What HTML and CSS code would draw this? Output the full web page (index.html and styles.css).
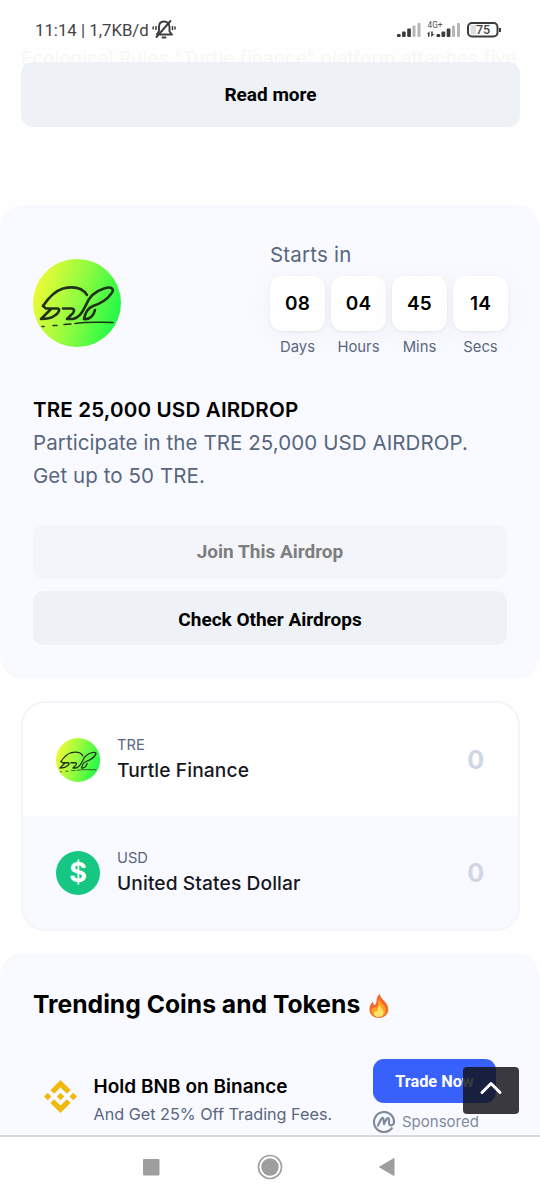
FILE: index.html
```html
<!DOCTYPE html>
<html lang="en">
<head>
<meta charset="utf-8">
<title>Turtle Finance Airdrop</title>
<link rel="stylesheet" href="styles.css">
</head>
<body>
<svg class="defs" width="0" height="0" aria-hidden="true">
  <defs>
    <linearGradient id="lime" x1="0" y1="0.35" x2="1" y2="0.65">
      <stop offset="0" stop-color="#f0fb35"/>
      <stop offset="0.5" stop-color="#90fc40"/>
      <stop offset="0.85" stop-color="#3dfb45"/>
      <stop offset="1" stop-color="#22f64c"/>
    </linearGradient>
    <symbol id="turtle" viewBox="0 0 88 88">
      <circle cx="44" cy="44" r="44" fill="url(#lime)"/>
      <g fill="none" stroke="#1f331c" stroke-width="2.600" stroke-linecap="round" stroke-linejoin="round">
        <path d="M10 47C16 38 22 32 30 29.500C41 27 49 28 54 36"/>
        <path d="M10 47L13 49.500H24C28 49.500 26 54 21 57C17 60 13 60 8 60L18 50"/>
        <path d="M30 49.500H38C43 49.500 41 54 38 56L34 60H40C48 58 50 51 53 46C56 38 63 32 71 29.500C79 27 82 30 78 35C73 42 66 45 60 47C55 49 52 55 51 60C57 61 61 56 62 51"/>
        <path d="M9 67.500H11M20 66.500H24M31 65.500L38 65M42 64.500C56 62.500 66 63.500 80 63.500" stroke-width="1.500"/>
      </g>
    </symbol>
  </defs>
</svg>
<div class="screen">
  <header class="status">
    <span class="clock">11:14 | 1,7KB/d</span>
    <svg class="bell" width="24" height="22" viewBox="0 0 24 22" fill="none" stroke="#3c3c3c" stroke-width="1.900" stroke-linecap="round" stroke-linejoin="round">
      <path d="M8 15.500H20L17.500 12.500V8C17.500 4.500 15 2.500 12 2.500S7 4.500 7 8V12L5 15.500"/>
      <path d="M4.500 18L18.500 2M10.500 18.500H13.500"/><path d="M4 7.500V10.500M1.200 8V10M20.500 7.500V10.500M23 8V10" stroke-width="1.500"/>
    </svg>
    <span class="grow"></span>
    <svg class="signals" width="108" height="24" viewBox="0 0 108 24">
      <g fill="#3a3a3a">
        <rect x="1" y="14" width="3.700" height="3" rx="1"/><rect x="6" y="11.500" width="3.700" height="5.500" rx="1"/><rect x="11.200" y="8.500" width="3.700" height="8.500" rx="1"/>
        <rect x="40.500" y="14" width="3.700" height="3" rx="1"/><rect x="45.500" y="11.500" width="3.700" height="5.500" rx="1"/><rect x="50.700" y="8.500" width="3.700" height="8.500" rx="1"/>
        <path d="M31 14L33.500 11.200V16.700H32V14ZM35.200 11.500H36.700V14H38.500L35.200 17Z"/>
      </g>
      <g fill="#b5b5b5">
        <rect x="16.500" y="5.500" width="3" height="11.500" rx="1"/><rect x="21.500" y="3" width="3" height="14" rx="1"/>
        <rect x="56" y="5.500" width="3" height="11.500" rx="1"/><rect x="61" y="3" width="3" height="14" rx="1"/>
      </g>
      <text x="31.500" y="7.500" class="net">4G+</text>
      <rect x="72" y="3" width="29.500" height="13.500" rx="4" fill="#fff" stroke="#3a3a3a" stroke-width="2"/>
      <path d="M74.500 5H80V14.500H74.500Z" fill="#dedede"/>
      <path d="M104 8V12" stroke="#3a3a3a" stroke-width="2"/>
      <text x="87" y="14" class="pct">75</text>
    </svg>
  </header>

  <main class="page">
    <p class="faded">Ecological Rules “Turtle finance” platform attaches five</p>
    <button class="btn read">Read more</button>

    <section class="airdrop">
      <div class="top">
        <svg class="logo" width="88" height="88"><use href="#turtle"/></svg>
        <div class="countdown">
          <div class="starts">Starts in</div>
          <div class="units">
            <div class="unit"><b>08</b><span>Days</span></div>
            <div class="unit"><b>04</b><span>Hours</span></div>
            <div class="unit"><b>45</b><span>Mins</span></div>
            <div class="unit"><b>14</b><span>Secs</span></div>
          </div>
        </div>
      </div>
      <h2 class="title">TRE 25,000 USD AIRDROP</h2>
      <p class="desc">Participate in the TRE 25,000 USD AIRDROP.<br>Get up to 50 TRE.</p>
      <button class="btn join">Join This Airdrop</button>
      <button class="btn check">Check Other Airdrops</button>
    </section>

    <section class="converter">
      <div class="coin">
        <svg width="44" height="44"><use href="#turtle"/></svg>
        <div class="names"><span class="sym">TRE</span><span class="name">Turtle Finance</span></div>
        <span class="amount">0</span>
      </div>
      <div class="coin fiat">
        <span class="usd">$</span>
        <div class="names"><span class="sym">USD</span><span class="name">United States Dollar</span></div>
        <span class="amount">0</span>
      </div>
    </section>

    <section class="trending">
      <h2 class="heading"><span>Trending Coins and Tokens</span>
        <svg width="20" height="24" viewBox="0 0 20 24">
          <path d="M10.500 0C12 5 17.500 8 19 13C20.500 19 16 24 10 24C4 24 0 20 .5 14C.8 11 2.500 9 4 7.500C4 10 5 11 6 11C9 8 6 4 10.500 0Z" fill="#f4672d"/>
          <path d="M10 5C11 9 17 11 17 16C17 20 14 23 10 23C5 23 2 20 2.500 15L5 13C6 14 7.500 14 8.500 12C9.500 10 8.500 8 10 5Z" fill="#ffa01f"/>
          <path d="M11 11C11 14 15 15 14.500 19C14 22 12 23 9.500 23C6 23 4.500 20.500 5.500 17C7 18 8 18 8.500 16C9 14 9 13 11 11Z" fill="#ffe36b"/>
        </svg>
      </h2>
      <div class="promo">
        <svg class="bnb" width="33" height="33" viewBox="0 0 24 24" fill="#f0b90b"><path d="M16.624 13.920l2.718 2.716-7.353 7.353-7.353-7.352 2.717-2.717 4.636 4.660 4.635-4.660zM21.261 9.284L24 12l-2.715 2.716L18.568 12zM11.989 9.285l2.716 2.691-2.716 2.717L9.272 12zM2.716 9.284L5.409 12l-2.692 2.692L0 12zM11.989.012l7.353 7.329-2.718 2.715-4.635-4.635-4.636 4.659-2.717-2.715z"/></svg>
        <div class="offer"><b>Hold BNB on Binance</b><span>And Get 25% Off Trading Fees.</span></div>
        <div class="action">
          <button class="btn trade">Trade Now</button>
          <div class="sponsored">
            <svg width="22" height="22" viewBox="0 0 22 22" fill="none" stroke="#808a9d" stroke-width="2.200" stroke-linecap="round" stroke-linejoin="round"><path d="M18.800 17.300A10 10 0 1 1 21 11C21 15 16 15.500 16 12V9C16 6.500 14.300 6.500 13.300 8.500L11 13L10.500 8C10.200 6.500 9 6.500 8.200 8L5 14.500"/></svg>
            <span>Sponsored</span>
          </div>
        </div>
      </div>
    </section>
  </main>

  <div class="totop"><svg width="24" height="16" viewBox="0 0 24 16" fill="none" stroke="#fff" stroke-width="3" stroke-linecap="round" stroke-linejoin="round"><path d="M3 12.500L12 3.500L21 12.500"/></svg></div>

  <nav class="navbar">
    <svg width="252" height="26" viewBox="0 0 252 26" fill="#9e9e9e">
      <rect x="0" y="5" width="16.500" height="16.500" rx="1"/>
      <circle cx="127" cy="13" r="8.700"/><circle cx="127" cy="13" r="11.500" fill="none" stroke="#9e9e9e" stroke-width="1.700"/>
      <path d="M236.500 13L251 4.500V21.500Z" stroke="#9e9e9e" stroke-linejoin="round"/>
    </svg>
  </nav>
</div>
</body>
</html>
```

FILE: styles.css
```css
* { box-sizing: border-box; margin: 0; padding: 0; }
body { background: #fff; font-family: Inter, "Liberation Sans", sans-serif; color: #000; }
.defs { position: absolute; }
.screen { position: relative; width: 540px; height: 1200px; overflow: hidden; display: flex; flex-direction: column; background: #fefefe; }

.status { height: 47px; flex: none; display: flex; align-items: flex-start; padding: 19px 38px 0 35px; font-family: Roboto, sans-serif; }
.clock { font-size: 16.8px; line-height: 23px; color: #444; white-space: nowrap; }
.bell { margin-left: 3px; }
.grow { flex: 1; }
.signals { margin-top: 1px; margin-right: -2px; }
.net { font: 8.3px Roboto, sans-serif; fill: #555; }
.pct { font: 500 12.5px Roboto, sans-serif; fill: #444; text-anchor: middle; }

.page { flex: 1; min-height: 0; overflow: hidden; display: flex; flex-direction: column; }
.faded { height: 15px; flex: none; padding-left: 21px; font-size: 18.5px; line-height: 22px; color: #f7f7f7; white-space: nowrap; letter-spacing: .3px; }
.btn { display: block; position: relative; border: 0; background: #eef1f5; font-family: Roboto, sans-serif; font-weight: 700; font-size: 19px; color: #000; text-align: center; white-space: nowrap; }
.read { flex: none; width: 499px; height: 65px; margin-left: 21px; padding-bottom: 1px; border-radius: 12px; }

.airdrop { flex: none; height: 474px; margin-top: 78px; padding: 36px 33px 0; border-radius: 24px; background: #f9faff; }
.top { display: flex; justify-content: space-between; }
.logo { margin-top: 18px; }
.countdown { width: 237px; }
.starts { font-size: 20.5px; line-height: 27px; color: #58667e; letter-spacing: .2px; }
.units { display: flex; gap: 6px; margin-top: 8px; }
.unit { width: 55px; display: flex; flex-direction: column; align-items: center; }
.unit b { width: 55px; height: 55px; border-radius: 12px; background: #fff; box-shadow: 0 1px 3px rgba(88,102,126,.1), 0 4px 24px rgba(88,102,126,.05); text-align: center; font-size: 19px; font-weight: 600; line-height: 56px; letter-spacing: .2px; }
.unit span { margin-top: 6px; font-size: 14.8px; line-height: 20px; color: #58667e; }
.title { margin-top: 39px; font-size: 20.6px; line-height: 27px; font-weight: 600; white-space: nowrap; letter-spacing: .15px; }
.desc { margin-top: 3px; font-size: 20.5px; line-height: 33px; color: #58667e; white-space: nowrap; letter-spacing: .08px; }
.airdrop .btn { width: 474px; height: 54px; border-radius: 10px; }
.airdrop .join { margin-top: 33px; padding-bottom: 1px; background: #f4f5fa; color: #7d7e80; }
.airdrop .check { margin-top: 12px; padding-top: 2px; }

.converter { flex: none; width: 499px; height: 230px; margin: 22px 0 0 21px; border: 2px solid #f2f5f9; border-radius: 24px; overflow: hidden; background: #fff; }
.coin { height: 113px; display: flex; align-items: center; padding: 0 34px 0 33px; }
.fiat { background: #f9faff; }
.names { flex: 1; display: flex; flex-direction: column; margin-left: 17px; }
.sym { font-size: 14.7px; line-height: 22px; color: #58667e; }
.name { font-size: 19.2px; line-height: 29px; font-weight: 500; color: #17181f; letter-spacing: .1px; }
.amount { font-size: 25px; font-weight: 700; color: #cfd6e4; }
.usd { width: 44px; height: 44px; border-radius: 50%; background: #16c784; color: #fff; font: 700 27px/43px Inter, sans-serif; text-align: center; }

.trending { flex: none; height: 260px; margin-top: 22px; padding: 35px 33px 0; border-radius: 24px; background: #f9faff; }
.heading { display: flex; align-items: center; gap: 9px; height: 32px; font-size: 24.7px; font-weight: 700; white-space: nowrap; }
.heading svg { margin-top: 3px; }
.promo { display: flex; margin-top: 39px; }
.bnb { margin: 21px 0 0 11px; }
.offer { display: flex; flex-direction: column; margin: 14px 0 0 16.5px; width: 279.5px; white-space: nowrap; }
.offer b { font-size: 19px; line-height: 28px; font-weight: 600; letter-spacing: .03px; }
.offer span { font-size: 16.2px; line-height: 26px; color: #58667e; }
.trade { width: 123px; height: 44px; border-radius: 11px; background: #3861fb; color: #fff; font-size: 16.3px; }
.sponsored { display: flex; align-items: center; gap: 7px; margin-top: 7px; font-size: 15px; line-height: 22px; color: #808a9d; }
.sponsored span { padding-top: 1px; }

.totop { position: absolute; left: 463px; top: 1067px; width: 56px; height: 47px; border-radius: 4px; background: rgba(18,18,24,.83); display: flex; align-items: center; justify-content: center; padding-bottom: 6px; }
.navbar { flex: none; height: 65px; border-top: 2px solid #d7d9df; background: #fff; padding: 17px 0 0 143px; }
```
